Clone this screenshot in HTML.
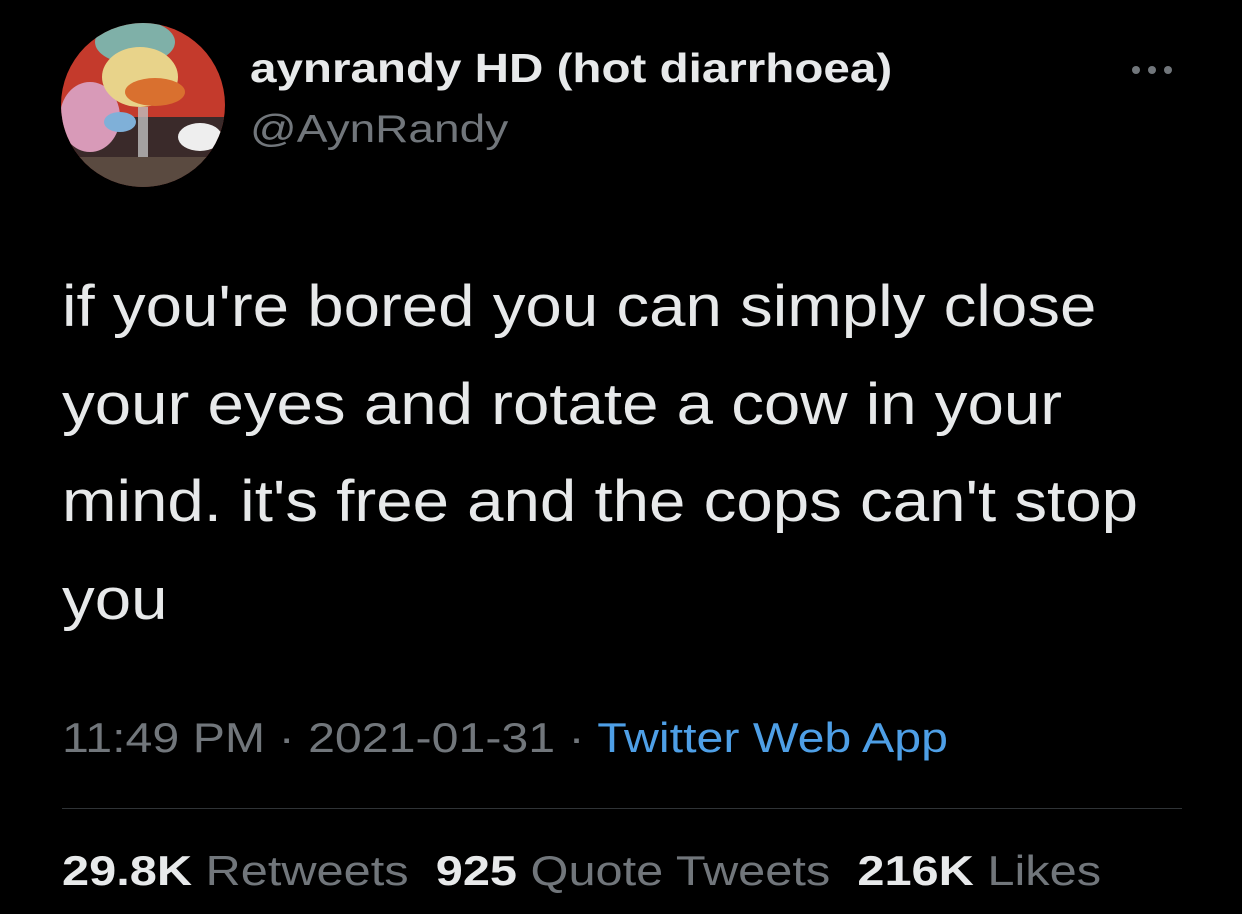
<!DOCTYPE html>
<html><head><meta charset="utf-8"><style>
html,body{margin:0;padding:0;background:#000;width:1242px;height:914px;overflow:hidden;font-family:"Liberation Sans",sans-serif;}
.a{position:absolute;white-space:nowrap;transform-origin:0 0}
.d{position:absolute;top:66px;width:8px;height:8px;border-radius:50%;background:#71767b}
</style></head><body>
<svg class="a" style="left:60px;top:22px" width="166" height="166" viewBox="0 0 166 166">
<defs><clipPath id="c"><circle cx="83" cy="83" r="82"/></clipPath></defs>
<g clip-path="url(#c)">
<rect width="166" height="166" fill="#c43a2c"/>
<rect x="0" y="95" width="166" height="71" fill="#3a2a2a"/>
<ellipse cx="30" cy="95" rx="30" ry="35" fill="#d89ab8"/>
<ellipse cx="75" cy="20" rx="40" ry="22" fill="#7fb0a8"/>
<ellipse cx="80" cy="55" rx="38" ry="30" fill="#e8d38a"/>
<ellipse cx="95" cy="70" rx="30" ry="14" fill="#d9702f"/>
<ellipse cx="60" cy="100" rx="16" ry="10" fill="#7fb0d8"/>
<rect x="78" y="85" width="10" height="55" fill="#bfbfbf" opacity=".8"/>
<ellipse cx="140" cy="115" rx="22" ry="14" fill="#eee"/>
<rect x="0" y="135" width="166" height="31" fill="#5a4a40"/>
</g></svg>
<div class="a" style="left:250px;top:45px;font-size:41px;font-weight:bold;color:#e7e9ea;transform:scaleX(1.16)">aynrandy HD (hot diarrhoea)</div>
<div class="a" style="left:250px;top:108px;font-size:39px;color:#71767b;transform:scaleX(1.18)">@AynRandy</div>
<div class="d" style="left:1132px"></div><div class="d" style="left:1148px"></div><div class="d" style="left:1164px"></div>
<div class="a" style="left:62px;top:258px;font-size:58px;line-height:97.5px;color:#e7e9ea;transform:scaleX(1.128)">if you're bored you can simply close<br>your eyes and rotate a cow in your<br>mind. it's free and the cops can't stop<br>you</div>
<div class="a" style="left:62px;top:714px;font-size:42px;color:#71767b;transform:scaleX(1.15)">11:49 PM · 2021-01-31 · <span style="color:#4e9fe6">Twitter Web App</span></div>
<div class="a" style="left:62px;top:808px;width:1120px;height:1px;background:#2f3336"></div>
<div class="a" style="left:62px;top:847px;font-size:42px;color:#71767b;transform:scaleX(1.16)"><b style="color:#e7e9ea">29.8K</b> Retweets &nbsp;<b style="color:#e7e9ea">925</b> Quote Tweets &nbsp;<b style="color:#e7e9ea">216K</b> Likes</div>
</body></html>
